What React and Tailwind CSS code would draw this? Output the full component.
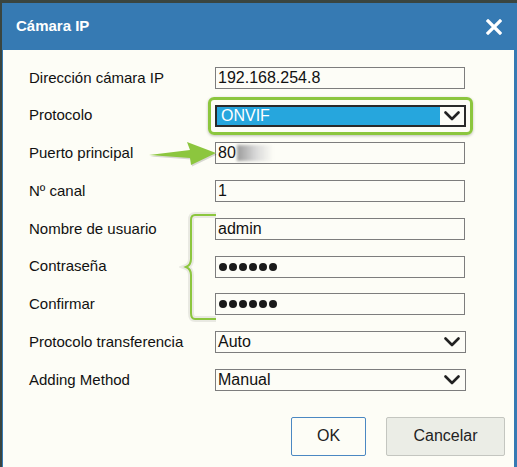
import React from 'react';

const font = { fontFamily: '"Liberation Sans", Arial, sans-serif' };

function Chevron() {
  return (
    <svg width="16" height="10" viewBox="0 0 16 10" className="shrink-0">
      <path d="M1.5 1.5 L8 8 L14.5 1.5" fill="none" stroke="#222" strokeWidth="2.6" strokeLinecap="round" strokeLinejoin="round" />
    </svg>
  );
}

function TextBox({ children }) {
  return (
    <div className="w-[250px] h-[22px] border border-[#7d7d7d] bg-[#fdfdf7] flex items-center pl-[2px] text-[16px] text-[#111] leading-none overflow-hidden">
      {children}
    </div>
  );
}

function Select({ value }) {
  return (
    <div className="w-[251px] h-[22px] border border-[#7d7d7d] bg-[#fdfdf7] flex items-center justify-between pl-[2px] pr-[5px] text-[16px] text-[#111] leading-none">
      <span>{value}</span>
      <Chevron />
    </div>
  );
}

function Dots() {
  return (
    <div className="flex gap-[2px] pl-[1px]">
      {[0, 1, 2, 3, 4, 5].map((i) => (
        <span key={i} className="w-[8px] h-[8px] rounded-full bg-[#1a1a1a]" />
      ))}
    </div>
  );
}

const rows = [
  ['Dirección cámara IP', <TextBox>192.168.254.8</TextBox>],
  [
    'Protocolo',
    <div className="relative">
      <div className="absolute -left-[7px] -top-[8px] w-[265px] h-[38px] rounded-[6px] border-[3px] border-[#8cc63e] shadow-[0_1px_3px_rgba(0,0,0,0.25)]" />
      <div className="w-[251px] h-[22px] border-2 border-[#2a2a2a] bg-[#fdfdf7] flex items-center text-[16px] leading-none">
        <div className="flex-1 h-full bg-[#26a6dd] text-white flex items-center pl-[4px]">ONVIF</div>
        <div className="w-[24px] flex justify-center">
          <Chevron />
        </div>
      </div>
    </div>,
  ],
  [
    'Puerto principal',
    <TextBox>
      <span>80</span>
      <span className="ml-[1px] w-[36px] h-[16px] bg-gradient-to-r from-[#9c9c9c] via-[#d6d6d6] to-transparent blur-[1.5px]" />
    </TextBox>,
  ],
  ['Nº canal', <TextBox>1</TextBox>],
  ['Nombre de usuario', <TextBox>admin</TextBox>],
  ['Contraseña', <TextBox><Dots /></TextBox>],
  ['Confirmar', <TextBox><Dots /></TextBox>],
  ['Protocolo transferencia', <Select value="Auto" />],
  ['Adding Method', <Select value="Manual" />],
];

export default function App() {
  return (
    <div className="w-[517px] h-[467px] bg-[#3a4540] pl-[2px] pt-[3px] overflow-hidden" style={font}>
      <div className="h-full bg-[#367ab3] pl-[1px] pr-[3px] flex flex-col">
        <div className="h-[47px] shrink-0 flex items-center justify-between pl-[13px] pr-[12px]">
          <span className="text-white font-bold text-[15px]">Cámara IP</span>
          <svg width="16" height="16" viewBox="0 0 16 16">
            <path d="M2 2 L14 14 M14 2 L2 14" stroke="#fff" strokeWidth="3.2" strokeLinecap="square" />
          </svg>
        </div>
        <div className="relative flex-1 bg-[#fdfdf6] pt-[9px]">
          {rows.map(([label, control]) => (
            <div key={label} className="h-[37.75px] flex items-center">
              <div className="w-[212px] pl-[26px] text-[15px] text-[#111]">{label}</div>
              {control}
            </div>
          ))}

          <div className="flex justify-end gap-[20px] pr-[9px] mt-[18px]">
            <button className="w-[75px] h-[39px] border border-[#4b88c2] rounded-[2px] bg-[#fdfdf6] text-[16px] text-[#222]">
              OK
            </button>
            <button className="w-[119px] h-[39px] border border-[#c4c6c0] rounded-[2px] bg-[#ebede6] text-[16px] text-[#222]">
              Cancelar
            </button>
          </div>

          {/* green arrow pointing at the port */}
          <svg className="absolute left-[141px] top-[89px]" width="76" height="30" viewBox="0 0 76 30">
            <polygon points="5,16 46,11 43,3 72,14 47,26 46,19" fill="rgba(0,0,0,0.15)" transform="translate(1,1.5)" />
            <polygon points="5,16 46,11 43,3 72,14 47,26 46,19" fill="#8cc63e" />
          </svg>

          {/* brace around credentials */}
          <svg className="absolute left-[176px] top-[161px]" width="40" height="112" viewBox="0 0 40 112">
            <path d="M37 4 H16 Q12 4 12 9 V48 Q12 54 7 56 Q12 58 12 64 V102 Q12 108 16 108 H37" fill="none" stroke="rgba(0,0,0,0.08)" strokeWidth="6" />
            <path d="M37 4 H16 Q12 4 12 9 V48 Q12 54 7 56 Q12 58 12 64 V102 Q12 108 16 108 H37" fill="none" stroke="#8cc63e" strokeWidth="2" />
          </svg>
        </div>
      </div>
    </div>
  );
}
